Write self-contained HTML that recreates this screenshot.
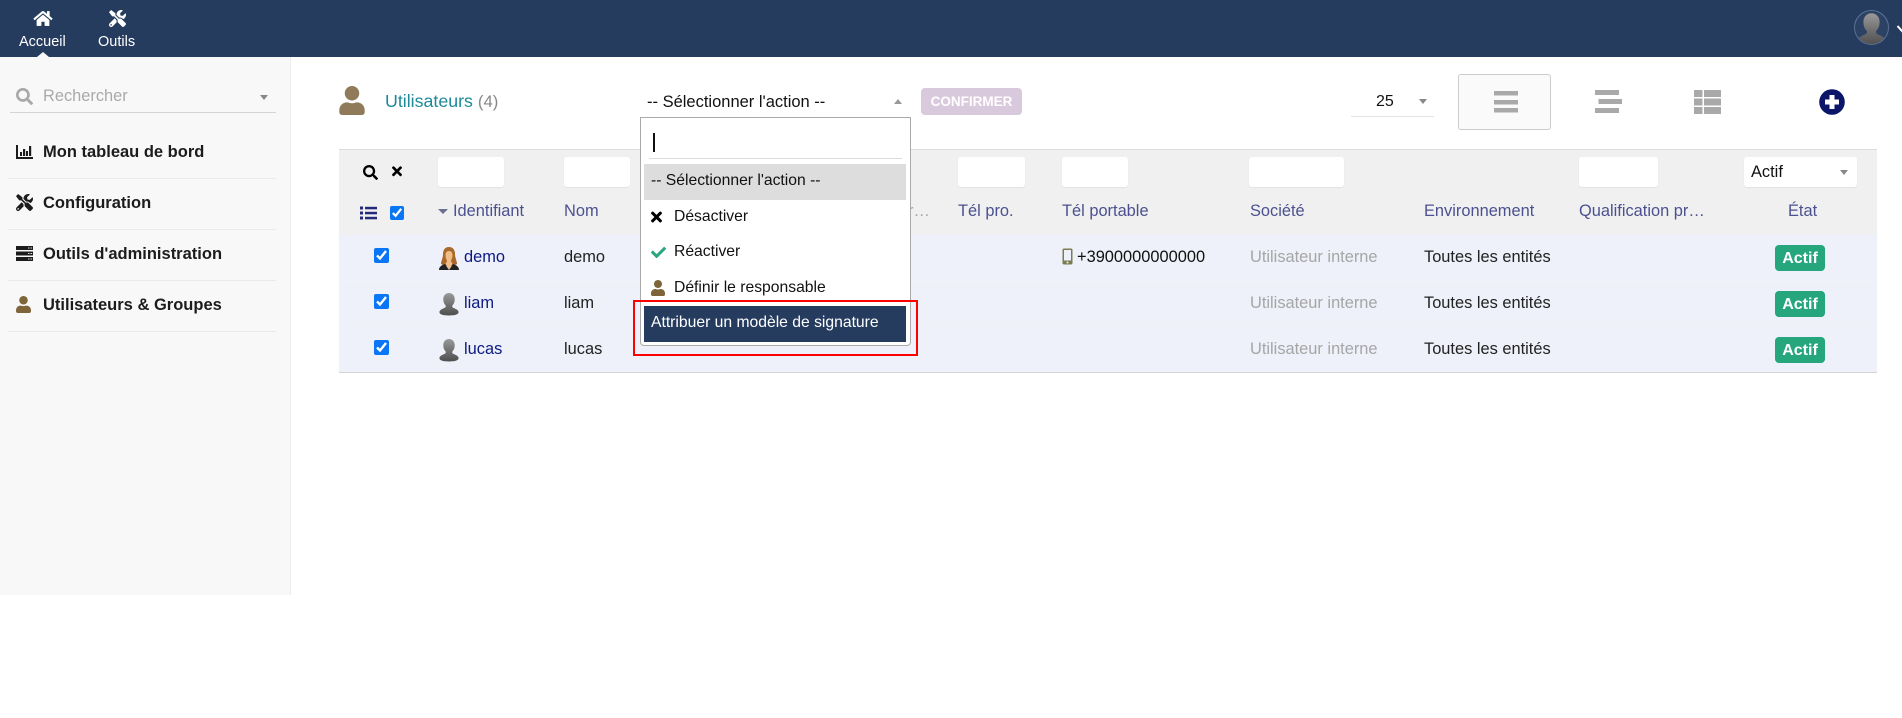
<!DOCTYPE html>
<html lang="fr"><head><meta charset="utf-8"><title>Utilisateurs</title>
<style>
html,body{margin:0;padding:0;width:1902px;height:718px;overflow:hidden;background:#fff}
body{position:relative;font-family:"Liberation Sans",Arial,sans-serif;font-size:16.4px;color:#222}
.a{position:absolute}
.t{position:absolute;line-height:20px;white-space:nowrap;margin-top:1px}
svg{position:absolute;display:block}
.f{position:absolute;top:157px;height:30px;background:#fff;border-radius:3px;box-shadow:0 1px 1px rgba(0,0,0,.06)}
.h{color:#4b5190}
.sep{position:absolute;left:8px;width:268px;height:1px;background:#e9e9e9}
.m{font-weight:bold;font-size:16.5px;left:43px;color:#1c1c1c}
.d{font-size:15.7px;color:#111}
.cb{position:absolute;margin:0;width:15px;height:15px;left:374px;accent-color:#0a75f5}
.u{color:#0c1a80}
.g{color:#a6a6a6}
.badge{position:absolute;left:1775px;width:50px;height:26px;line-height:27px;font-size:16px;background:#25a67c;color:#fff;font-weight:bold;text-align:center;border-radius:4px}
.tri{position:absolute;width:0;height:0;border-left:4.5px solid transparent;border-right:4.5px solid transparent;border-top:5px solid #888}
</style></head><body>
<svg width="0" height="0" style="position:absolute"><defs>
<symbol id="home" viewBox="0 0 576 512"><path d="M280.37 148.26L96 300.11V464a16 16 0 0 0 16 16l112.06-.29a16 16 0 0 0 15.92-16V368a16 16 0 0 1 16-16h64a16 16 0 0 1 16 16v95.64a16 16 0 0 0 16 16.05L464 480a16 16 0 0 0 16-16V300L295.67 148.26a12.19 12.19 0 0 0-15.3 0zM571.6 251.47L488 182.56V44.05a12 12 0 0 0-12-12h-56a12 12 0 0 0-12 12v72.61L318.47 43a48 48 0 0 0-61 0L4.34 251.47a12 12 0 0 0-1.6 16.9l25.5 31A12 12 0 0 0 45.15 301l235.22-193.74a12.19 12.19 0 0 1 15.3 0L530.9 301a12 12 0 0 0 16.9-1.6l25.5-31a12 12 0 0 0-1.7-16.93z"/></symbol>
<symbol id="tools" viewBox="0 0 512 512"><path d="M501.1 395.7L384 278.6c-23.1-23.1-57.6-27.6-85.4-13.9L192 158.1V96L64 0 0 64l96 128h62.1l106.6 106.6c-13.6 27.8-9.2 62.3 13.9 85.4l117.1 117.1c14.6 14.6 38.2 14.6 52.7 0l52.7-52.7c14.5-14.6 14.5-38.2 0-52.7zM331.7 225c28.3 0 54.9 11 74.9 31l19.4 19.4c15.8-6.9 30.8-16.5 43.8-29.5 37.1-37.1 49.7-89.3 37.9-136.7-2.2-9-13.5-12.1-20.1-5.5l-74.4 74.4-67.9-11.3L334 98.9l74.4-74.4c6.6-6.6 3.4-17.9-5.7-20.2-47.4-11.7-99.6.9-136.6 37.9-28.5 28.5-41.9 66.1-41.2 103.6l82.1 82.1c8.1-1.9 16.5-2.9 24.7-2.9zm-103.9 82l-56.7-56.7L18.7 402.8c-25 25-25 65.5 0 90.5s65.5 25 90.5 0l123.6-123.6c-7.6-19.9-9.9-41.6-5-62.7zM64 472c-13.2 0-24-10.8-24-24 0-13.3 10.7-24 24-24s24 10.7 24 24c0 13.2-10.7 24-24 24z"/></symbol>
<symbol id="user" viewBox="0 0 448 512"><path d="M224 256c70.7 0 128-57.3 128-128S294.7 0 224 0 96 57.3 96 128s57.3 128 128 128zm89.6 32h-16.7c-22.2 10.2-46.9 16-72.9 16s-50.6-5.8-72.9-16h-16.7C60.2 288 0 348.2 0 422.4V464c0 26.5 21.5 48 48 48h352c26.5 0 48-21.5 48-48v-41.6c0-74.2-60.2-134.4-134.4-134.4z"/></symbol>
<symbol id="search" viewBox="0 0 512 512"><path d="M505 442.7L405.3 343c-4.5-4.5-10.6-7-17-7H372c27.6-35.3 44-79.7 44-128C416 93.1 322.9 0 208 0S0 93.1 0 208s93.1 208 208 208c48.3 0 92.7-16.4 128-44v16.3c0 6.4 2.5 12.5 7 17l99.7 99.7c9.4 9.4 24.6 9.4 33.9 0l28.3-28.3c9.4-9.4 9.4-24.6.1-34zM208 336c-70.7 0-128-57.2-128-128 0-70.7 57.2-128 128-128 70.7 0 128 57.2 128 128 0 70.7-57.2 128-128 128z"/></symbol>
<symbol id="times" viewBox="0 0 352 512"><path d="M242.72 256l100.07-100.07c12.28-12.28 12.28-32.19 0-44.48l-22.24-22.24c-12.28-12.28-32.19-12.28-44.48 0L176 189.28 75.93 89.21c-12.28-12.28-32.19-12.28-44.48 0L9.21 111.45c-12.28 12.28-12.28 32.19 0 44.48L109.28 256 9.21 356.07c-12.28 12.28-12.28 32.19 0 44.48l22.24 22.24c12.28 12.28 32.2 12.28 44.48 0L176 322.72l100.07 100.07c12.28 12.28 32.2 12.28 44.48 0l22.24-22.24c12.28-12.28 12.28-32.19 0-44.48L242.72 256z"/></symbol>
<symbol id="check" viewBox="0 0 512 512"><path d="M173.898 439.404l-166.4-166.4c-9.997-9.997-9.997-26.206 0-36.204l36.203-36.204c9.997-9.998 26.207-9.998 36.204 0L192 312.69 432.095 72.596c9.997-9.997 26.207-9.997 36.204 0l36.203 36.204c9.997 9.997 9.997 26.206 0 36.204l-294.4 294.401c-9.998 9.997-26.207 9.997-36.204-.001z"/></symbol>
<linearGradient id="gy" x1="0" y1="0" x2="0" y2="1"><stop offset="0" stop-color="#9a9a9a"/><stop offset=".55" stop-color="#6e6e6e"/><stop offset="1" stop-color="#4f4f4f"/></linearGradient>
<symbol id="bust" viewBox="0 0 20 24"><path fill="url(#gy)" d="M10 0c3.600 0 6 2.800 6 6.500 0 2.800-1 5-2.500 6.500-.3 1 0 2 .8 2.400 2.700 1.200 5.700 2.300 5.700 4.600 0 2.600-4.500 3.500-10 3.500S0 22.600 0 20c0-2.300 3-3.400 5.700-4.600.8-.4 1.100-1.400.8-2.400C5 11.500 4 9.300 4 6.500 4 2.800 6.400 0 10 0z"/></symbol>
</defs></svg>

<!-- top bar -->
<div class="a" style="left:0;top:0;width:1902px;height:57px;background:#263c5f"></div>
<svg style="left:33px;top:10px" width="20" height="17" fill="#fff"><use href="#home"/></svg>
<svg style="left:109px;top:10px" width="17" height="17" fill="#fff"><use href="#tools"/></svg>
<div class="t" style="left:19px;top:31px;font-size:14.5px;color:#fff">Accueil</div>
<div class="t" style="left:98px;top:31px;font-size:14.5px;color:#fff">Outils</div>
<div class="a" style="left:37px;top:52px;width:0;height:0;border-left:6px solid transparent;border-right:6px solid transparent;border-bottom:5px solid #f8f8f8"></div>
<div class="a" style="left:1854px;top:10px;width:33px;height:33px;border:1px solid #5b7194;border-radius:50%;overflow:hidden;background:#2c4264">
<svg style="left:3px;top:2px" width="27" height="33"><use href="#bust"/></svg></div>
<svg style="left:1896px;top:24px" width="12" height="12"><path d="M1.500 2 L6 7 L10.500 2" stroke="#fff" stroke-width="2" fill="none"/></svg>

<!-- sidebar -->
<div class="a" style="left:0;top:57px;width:290px;height:538px;background:#f8f8f8;border-right:1px solid #eee"></div>
<svg style="left:16px;top:88px" width="17" height="17" fill="#a8a8a8"><use href="#search"/></svg>
<div class="t" style="left:43px;top:85px;font-size:16.4px;color:#aaa">Rechercher</div>
<div class="tri" style="left:260px;top:95px"></div>
<div class="a" style="left:10px;top:112px;width:266px;height:1px;background:#d5d5d5"></div>
<svg style="left:16px;top:145px" width="17" height="14" viewBox="0 0 17 14" fill="#1c1c1c"><path d="M0 0h2v12H17v2H0z"/><rect x="4" y="7" width="2" height="4"/><rect x="7" y="4" width="2.200" height="7"/><rect x="10" y="6" width="2" height="5"/><rect x="13" y="1" width="2.200" height="10"/></svg>
<div class="t m" style="top:141px">Mon tableau de bord</div>
<div class="sep" style="top:178px"></div>
<svg style="left:16px;top:194px" width="17" height="17" fill="#1c1c1c"><use href="#tools"/></svg>
<div class="t m" style="top:192px">Configuration</div>
<div class="sep" style="top:229px"></div>
<svg style="left:16px;top:246px" width="17" height="15" viewBox="0 0 17 15" fill="#1c1c1c"><path d="M0 0h17v4H0zM0 5.500h17v4H0zM0 11h17v4H0z"/><g fill="#ddd"><rect x="12" y="1.500" width="1.500" height="1"/><rect x="14.500" y="1.500" width="1.500" height="1"/><rect x="12" y="7" width="1.500" height="1"/><rect x="14.500" y="7" width="1.500" height="1"/><rect x="12" y="12.500" width="1.500" height="1"/><rect x="14.500" y="12.500" width="1.500" height="1"/></g></svg>
<div class="t m" style="top:243px">Outils d'administration</div>
<div class="sep" style="top:280px"></div>
<svg style="left:16px;top:296px" width="15" height="17" fill="#7d6439"><use href="#user"/></svg>
<div class="t m" style="top:294px">Utilisateurs &amp; Groupes</div>
<div class="sep" style="top:331px"></div>

<!-- title row -->
<svg style="left:339px;top:86px" width="26" height="29" fill="#8f7b5a"><use href="#user"/></svg>
<div class="t" style="left:385px;top:90px;font-size:17.8px;color:#1d8a99">Utilisateurs <span style="color:#888;font-size:16.8px">(4)</span></div>
<div class="t" style="left:647px;top:91px;font-size:16.5px;color:#111">-- Sélectionner l'action --</div>
<div class="a" style="left:894px;top:99px;width:0;height:0;border-left:4px solid transparent;border-right:4px solid transparent;border-bottom:5px solid #999"></div>
<div class="a" style="left:921px;top:88px;width:101px;height:27px;line-height:27px;background:#d9c9dd;border-radius:4px;color:#fff;font-weight:bold;font-size:13.5px;text-align:center">CONFIRMER</div>

<!-- right tools -->
<div class="t" style="left:1376px;top:91px;font-size:16px;color:#111">25</div>
<div class="tri" style="left:1419px;top:99px"></div>
<div class="a" style="left:1351px;top:116px;width:83px;height:1px;background:#e3e3e3"></div>
<div class="a" style="left:1458px;top:74px;width:91px;height:54px;background:#fafafa;border:1px solid #ccc;border-radius:3px"></div>
<svg style="left:1494px;top:91px" width="24" height="22" fill="#a9a9a9"><rect y="0" width="24" height="4.500"/><rect y="9" width="24" height="4.500"/><rect y="17" width="24" height="4.500"/></svg>
<svg style="left:1595px;top:90px" width="27" height="24" fill="#a9a9a9"><rect y="0" width="24" height="5"/><rect x="3.500" y="9" width="23.500" height="5"/><rect y="18" width="24" height="5"/></svg>
<svg style="left:1694px;top:90px" width="27" height="24" fill="#a9a9a9"><rect width="8.500" height="7"/><rect x="10" width="17" height="7"/><rect y="8.500" width="8.500" height="7"/><rect x="10" y="8.500" width="17" height="7"/><rect y="17" width="8.500" height="7"/><rect x="10" y="17" width="17" height="7"/></svg>
<svg style="left:1819px;top:89px" width="26" height="26"><circle cx="13" cy="13" r="12.800" fill="#0b1668"/><path d="M10.500 6h5v4.500H20v5h-4.500V20h-5v-4.500H6v-5h4.500z" fill="#fff"/></svg>

<!-- table -->
<div class="a" style="left:339px;top:149px;width:1538px;height:85px;background:#f0f0f0;border-top:1px solid #ddd;border-bottom:1px solid #ddd"></div>
<div class="a" style="left:339px;top:235px;width:1538px;height:137px;background:#eef1f9;border-bottom:1px solid #d5d5d5"></div>
<div class="a" style="left:339px;top:280px;width:1538px;height:1px;background:#f1f3f9"></div>
<div class="a" style="left:339px;top:326px;width:1538px;height:1px;background:#f1f3f9"></div>

<svg style="left:363px;top:165px" width="15" height="15" fill="#000"><use href="#search"/></svg>
<svg style="left:392px;top:164px" width="10" height="14.500" fill="#000"><use href="#times"/></svg>
<svg style="left:360px;top:206px" width="17" height="14" viewBox="0 0 17 14" fill="#232a7c"><rect width="3" height="3" y="0.500"/><rect width="3" height="3" y="5.500"/><rect width="3" height="3" y="10.500"/><rect x="5" y="0.800" width="12" height="2.500"/><rect x="5" y="5.800" width="12" height="2.500"/><rect x="5" y="10.800" width="12" height="2.500"/></svg>
<input type="checkbox" class="cb" checked style="left:390px;top:206px;width:14px;height:14px">

<div class="f" style="left:438px;width:66px"></div>
<div class="f" style="left:564px;width:66px"></div>
<div class="f" style="left:958px;width:67px"></div>
<div class="f" style="left:1062px;width:66px"></div>
<div class="f" style="left:1249px;width:95px"></div>
<div class="f" style="left:1579px;width:79px"></div>
<div class="f" style="left:1744px;width:113px"></div>
<div class="t" style="left:1751px;top:161px;color:#111">Actif</div>
<div class="tri" style="left:1840px;top:170px"></div>

<div class="tri" style="left:438px;top:209px;border-left-width:5px;border-right-width:5px;border-top-color:#6b6f90"></div>
<div class="t h" style="left:453px;top:200px">Identifiant</div>
<div class="t h" style="left:564px;top:200px">Nom</div>
<div class="t h" style="left:958px;top:200px">Tél pro.</div>
<div class="t h" style="left:1062px;top:200px">Tél portable</div>
<div class="t h" style="left:1250px;top:200px">Société</div>
<div class="t h" style="left:1424px;top:200px">Environnement</div>
<div class="t h" style="left:1579px;top:200px">Qualification pr…</div>
<div class="t h" style="left:1788px;top:200px">État</div>
<div class="t g" style="left:908px;top:200px">r…</div>

<!-- rows -->
<input type="checkbox" class="cb" checked style="top:248px">
<input type="checkbox" class="cb" checked style="top:294px">
<input type="checkbox" class="cb" checked style="top:340px">

<svg style="left:439px;top:247px" width="20" height="23" viewBox="0 0 20 23"><path d="M10 0c4 0 6 3 6 7 0 4 2 7 2 10l-4 2H6l-4-2c0-3 2-6 2-10 0-4 2-7 6-7z" fill="#a8692a"/><path d="M10 4c2.500 0 3.500 2 3.500 4.500S12 13 12 14.500l1.500 2L10 23l-3.500-6.500L8 14.500C8 13 6.500 11 6.500 8.500S7.500 4 10 4z" fill="#f0bd88"/><path d="M0 23c0-3.500 3-5 6-6l4 6 4-6c3 1 6 2.500 6 6z" fill="#222"/></svg>
<svg style="left:439px;top:293px" width="20" height="23"><use href="#bust"/></svg>
<svg style="left:439px;top:339px" width="20" height="23"><use href="#bust"/></svg>

<div class="t u" style="left:464px;top:246px">demo</div>
<div class="t u" style="left:464px;top:292px">liam</div>
<div class="t u" style="left:464px;top:338px">lucas</div>
<div class="t" style="left:564px;top:246px">demo</div>
<div class="t" style="left:564px;top:292px">liam</div>
<div class="t" style="left:564px;top:338px">lucas</div>

<svg style="left:1062px;top:248px" width="11" height="17" viewBox="0 0 11 17"><rect x=".5" y=".5" width="10" height="16" rx="1.500" fill="#7c7c50"/><rect x="2" y="2" width="7" height="10.500" fill="#eef1f9"/><circle cx="5.500" cy="14.500" r="1" fill="#eef1f9"/></svg>
<div class="t" style="left:1077px;top:246px;color:#111">+3900000000000</div>

<div class="t g" style="left:1250px;top:246px">Utilisateur interne</div>
<div class="t g" style="left:1250px;top:292px">Utilisateur interne</div>
<div class="t g" style="left:1250px;top:338px">Utilisateur interne</div>
<div class="t" style="left:1424px;top:246px">Toutes les entités</div>
<div class="t" style="left:1424px;top:292px">Toutes les entités</div>
<div class="t" style="left:1424px;top:338px">Toutes les entités</div>
<div class="badge" style="top:245px">Actif</div>
<div class="badge" style="top:291px">Actif</div>
<div class="badge" style="top:337px">Actif</div>

<!-- dropdown -->
<div class="a" style="left:640px;top:117px;width:269px;height:227px;background:#fff;border:1px solid #aaa;border-radius:0 0 4px 4px"></div>
<div class="a" style="left:653px;top:133px;width:2px;height:19px;background:#111"></div>
<div class="a" style="left:649px;top:158px;width:253px;height:1px;background:#ddd"></div>
<div class="a" style="left:644px;top:164px;width:262px;height:36px;background:#ddd"></div>
<div class="t d" style="left:651px;top:170px">-- Sélectionner l'action --</div>
<svg style="left:651px;top:209px" width="11" height="16" fill="#000"><use href="#times"/></svg>
<div class="t d" style="left:674px;top:206px">Désactiver</div>
<svg style="left:651px;top:245px" width="15" height="15" fill="#2aa57f"><use href="#check"/></svg>
<div class="t d" style="left:674px;top:241px">Réactiver</div>
<svg style="left:651px;top:280px" width="14" height="16" fill="#7d6439"><use href="#user"/></svg>
<div class="t d" style="left:674px;top:277px">Définir le responsable</div>
<div class="a" style="left:644px;top:306px;width:262px;height:36px;background:#263c5f"></div>
<div class="t d" style="left:651px;top:312px;color:#fff">Attribuer un modèle de signature</div>
<div class="a" style="left:633px;top:300px;width:281px;height:52px;border:2px solid #f00"></div>
</body></html>
